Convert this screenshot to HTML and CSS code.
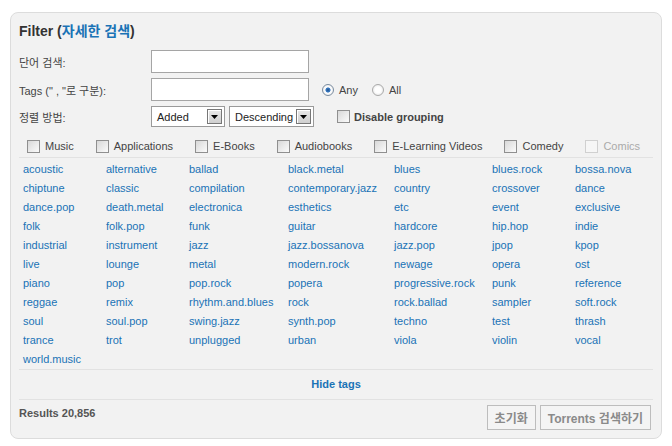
FILE: index.html
```html
<!DOCTYPE html>
<html lang="ko">
<head>
  <meta charset="UTF-8" />
  <title>Torrents - Filter</title>
  <link rel="stylesheet" href="styles.css">
</head>
<body>
  <div class="panel">
    <h2 class="title">Filter (<a href="#">자세한 검색</a>)</h2>

    <div class="form">
      <label class="label">단어 검색:</label>
      <div class="field"><input type="text" class="text" /></div>

      <label class="label">Tags (" , "로 구분):</label>
      <div class="field">
        <input type="text" class="text" />
        <span class="radio checked"></span><span class="opt">Any</span>
        <span class="radio"></span><span class="opt">All</span>
      </div>

      <label class="label">정렬 방법:</label>
      <div class="field">
        <span class="select sel-order">Added<span class="arrow"><svg width="7" height="4" viewBox="0 0 7 4"><path d="M0 0h7L3.5 4z" fill="#000"/></svg></span></span>
        <span class="select sel-dir">Descending<span class="arrow"><svg width="7" height="4" viewBox="0 0 7 4"><path d="M0 0h7L3.5 4z" fill="#000"/></svg></span></span>
        <span class="check group-check"></span><b class="opt">Disable grouping</b>
      </div>
    </div>

    <div class="cats">
      <span class="cat"><span class="check"></span>Music</span>
      <span class="cat"><span class="check"></span>Applications</span>
      <span class="cat"><span class="check"></span>E-Books</span>
      <span class="cat"><span class="check"></span>Audiobooks</span>
      <span class="cat"><span class="check"></span>E-Learning Videos</span>
      <span class="cat"><span class="check"></span>Comedy</span>
      <span class="cat off"><span class="check"></span>Comics</span>
    </div>

    <div class="tags" id="tags"></div>

    <div class="hide"><a href="#">Hide tags</a></div>

    <div class="foot">
      <b class="results">Results 20,856</b>
      <div class="buttons">
        <button>초기화</button>
        <button>Torrents 검색하기</button>
      </div>
    </div>
  </div>

  <script>
    const tags = [
      "acoustic", "alternative", "ballad", "black.metal", "blues", "blues.rock", "bossa.nova",
      "chiptune", "classic", "compilation", "contemporary.jazz", "country", "crossover", "dance",
      "dance.pop", "death.metal", "electronica", "esthetics", "etc", "event", "exclusive",
      "folk", "folk.pop", "funk", "guitar", "hardcore", "hip.hop", "indie",
      "industrial", "instrument", "jazz", "jazz.bossanova", "jazz.pop", "jpop", "kpop",
      "live", "lounge", "metal", "modern.rock", "newage", "opera", "ost",
      "piano", "pop", "pop.rock", "popera", "progressive.rock", "punk", "reference",
      "reggae", "remix", "rhythm.and.blues", "rock", "rock.ballad", "sampler", "soft.rock",
      "soul", "soul.pop", "swing.jazz", "synth.pop", "techno", "test", "thrash",
      "trance", "trot", "unplugged", "urban", "viola", "violin", "vocal",
      "world.music"
    ];

    const list = document.getElementById("tags");
    tags.forEach(function (t) {
      const a = document.createElement("a");
      a.href = "#";
      a.textContent = t;
      list.appendChild(a);
    });
  </script>
</body>
</html>
```

FILE: styles.css
```css
body {
  margin: 0;
  background: #fff;
  font-family: "Liberation Sans", Arial, "Noto Sans CJK KR", sans-serif;
  font-size: 11px;
  color: #333;
}
a {
  color: #1a73b6;
  text-decoration: none;
}
.panel {
  margin: 12px 0 0 10px;
  width: 634px;
  height: 425px;
  padding: 0 8px;
  background: #f2f2f2;
  border: 1px solid #dcdcdc;
  border-radius: 8px;
}
.title {
  margin: 0;
  padding-top: 10px;
  height: 27px;
  font-size: 14px;
  line-height: 16px;
  color: #333;
}
.title a {
  color: #1a73b6;
}
.form {
  display: grid;
  grid-template-columns: 132px auto;
  row-gap: 5px;
  align-items: center;
}
.label {
  font-size: 11px;
  color: #444;
}
.field {
  display: flex;
  align-items: center;
}
.text {
  box-sizing: border-box;
  width: 158px;
  height: 23px;
  margin: 0;
  border: 1px solid #a5a5a5;
  background: #fff;
}
.radio {
  box-sizing: border-box;
  width: 12px;
  height: 12px;
  margin: 0 5px 0 14px;
  border: 1px solid #aaa;
  border-radius: 50%;
  background: radial-gradient(#fff 40%, #ddd);
}
.radio.checked {
  margin-left: 13px;
  background: radial-gradient(#1d4f8c 0, #3b7cc4 30%, #fff 42%, #e0e0e0 100%);
  border-color: #7a8ca0;
}
.opt {
  font-size: 11px;
  color: #444;
}
b.opt {
  color: #444;
}
.select {
  box-sizing: border-box;
  display: inline-flex;
  align-items: center;
  justify-content: space-between;
  height: 21px;
  margin-right: 4px;
  padding: 0 2px 0 5px;
  background: #fff;
  border: 1px solid #9a9a9a;
  font-size: 11px;
  color: #222;
}
.sel-order {
  width: 74px;
}
.sel-dir {
  width: 85px;
}
.arrow {
  box-sizing: border-box;
  display: flex;
  align-items: center;
  justify-content: center;
  width: 15px;
  height: 15px;
  background: linear-gradient(#e8e8e8, #cfcfcf);
  border: 1px solid #777;
  box-shadow: inset 1px 1px 0 #fff;
}
.check {
  box-sizing: border-box;
  display: inline-block;
  width: 13px;
  height: 13px;
  border: 1px solid #8f8f8f;
  background: linear-gradient(135deg, #d8d8d8, #fbfbfb);
}
.group-check {
  margin: 0 4px 0 19px;
}
.cats {
  display: flex;
  align-items: center;
  gap: 22px;
  height: 22px;
  padding: 8px 0 0 8px;
  border-bottom: 1px solid #e2e2e2;
  font-size: 11px;
  color: #444;
}
.cat {
  display: flex;
  align-items: center;
  gap: 5px;
}
.cat.off {
  color: #aaa;
}
.cat.off .check {
  border-color: #d0d0d0;
  background: #f6f6f6;
}
.tags {
  display: grid;
  grid-template-columns: 83px 83px 99px 106px 98px 83px auto;
  grid-auto-rows: 19px;
  align-items: center;
  padding: 1px 0 1px 4px;
  border-bottom: 1px solid #e2e2e2;
  font-size: 11px;
}
.hide {
  height: 29px;
  line-height: 29px;
  text-align: center;
  font-weight: bold;
  font-size: 11px;
  border-bottom: 1px solid #e2e2e2;
}
.foot {
  display: flex;
  justify-content: space-between;
  align-items: center;
  height: 30px;
}
.results {
  font-size: 11px;
  color: #555;
  margin-top: -4px;
}
.buttons {
  display: flex;
  gap: 4px;
  margin-right: 2px;
  margin-top: 4px;
}
button {
  height: 25px;
  padding: 0 7px;
  background: #f4f4f4;
  border: 1px solid #bdbdbd;
  font-family: "Liberation Sans", Arial, "Noto Sans CJK KR", sans-serif;
  font-size: 12px;
  font-weight: bold;
  color: #8a8a8a;
}
```
